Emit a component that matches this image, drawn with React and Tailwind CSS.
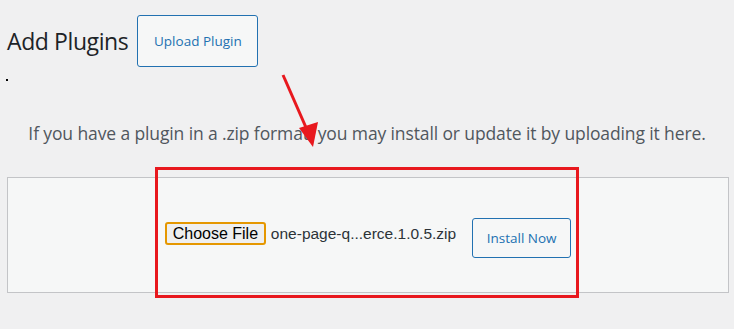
import React from 'react';

const App = () => {
  return (
    <div className="relative w-[734px] h-[329px] bg-[#f0f0f1] overflow-hidden font-['Open_Sans',sans-serif]">
      {/* Header */}
      <div className="flex items-center pl-[7px] pt-[15px]">
        <h1 className="text-[23px] leading-none font-normal text-[#1d2327] tracking-[-0.4px]">Add Plugins</h1>
        <button className="ml-[9px] w-[121px] h-[52px] rounded-[3px] border border-[#2271b1] bg-[#f6f7f7] text-[13.5px] text-[#2271b1]">
          Upload Plugin
        </button>
      </div>
      <div className="ml-[6px] mt-[12px] w-[2px] h-[2px] bg-black" />

      {/* Description */}
      <p className="mt-[40px] text-center text-[17.5px] leading-[24px] text-[#50575e] tracking-[-0.12px]">
        If you have a plugin in a .zip format, you may install or update it by uploading it here.
      </p>

      {/* Upload form */}
      <div className="ml-[7px] mt-[32px] w-[722px] h-[116px] border border-[#c3c4c7] bg-[#f6f7f7] flex justify-center items-start pt-[40px]">
        <div className="flex items-center mt-[4px]">
          <span className="w-[101px] h-[23px] flex items-center justify-center rounded-[3px] border-2 border-[#e59700] bg-[#efefef] text-[16px] text-black font-['Liberation_Sans',sans-serif]">
            Choose File
          </span>
          <span className="ml-[5px] text-[15.5px] text-[#2c3338] font-['Liberation_Sans',sans-serif]">one-page-q...erce.1.0.5.zip</span>
        </div>
        <button className="ml-[16px] w-[99px] h-[40px] rounded-[3px] border border-[#2271b1] bg-[#f6f7f7] text-[13.5px] text-[#2271b1]">
          Install Now
        </button>
      </div>

      {/* Annotation overlay */}
      <div className="absolute left-[155px] top-[167px] w-[424px] h-[131px] border-[3px] border-[#e8181e]" />
      <svg className="absolute left-0 top-0" width="734" height="329" viewBox="0 0 734 329">
        <line x1="283" y1="75" x2="308" y2="132" stroke="#e8181e" strokeWidth="3" />
        <polygon points="313,147 299,128 318,122" fill="#e8181e" />
      </svg>
    </div>
  );
};

export default App;
